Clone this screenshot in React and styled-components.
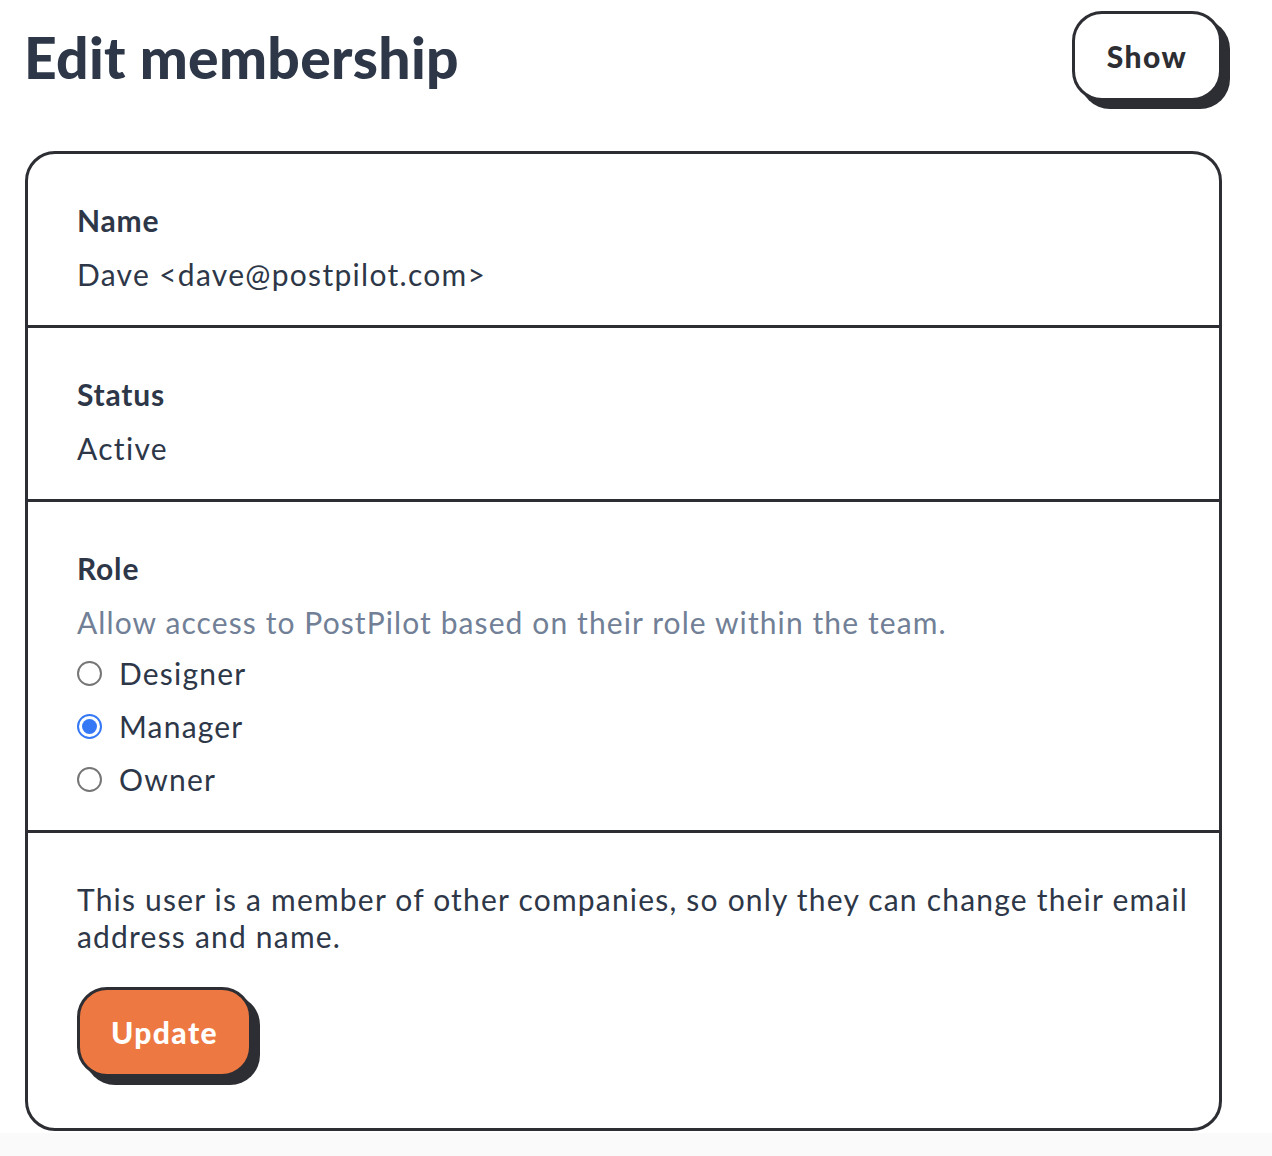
import React, { useState } from 'react'
import styled, { createGlobalStyle } from 'styled-components'

const GlobalStyle = createGlobalStyle`
  html, body {
    margin: 0;
    padding: 0;
    background: #fafafa;
    font-family: Lato, "Open Sans", sans-serif;
    color: #2d3748;
  }
`

const Page = styled.main`
  background: #ffffff;
  padding: 11px 50px 2px 25px;
`

const Header = styled.header`
  display: flex;
  justify-content: space-between;
  align-items: flex-start;
  margin-bottom: 50px;
`

const Title = styled.h1`
  margin: 18px 0 0 -1px;
  font-size: 57px;
  font-weight: 900;
  line-height: 1;
  letter-spacing: 0.3px;
  color: #2d3748;
`

const ChunkyButton = styled.button`
  font-family: Lato, sans-serif;
  font-weight: 900;
  font-size: 30px;
  letter-spacing: 1.4px;
  height: 90px;
  width: ${({ width }) => width}px;
  border: 3px solid #2d2e33;
  border-radius: 30px;
  box-shadow: 8px 8px 0 #2d2e33;
  background: ${({ primary }) => (primary ? '#ed7842' : '#ffffff')};
  color: ${({ primary }) => (primary ? '#ffffff' : '#2d2e33')};
  cursor: pointer;
  padding: 0;
`

const Card = styled.section`
  border: 3px solid #2d2e33;
  border-radius: 30px;
  overflow: hidden;
`

const Row = styled.div`
  padding: 48px 24px 32px 49px;
  border-top: ${({ first }) => (first ? 'none' : '3px solid #2d2e33')};
  padding-bottom: ${({ last }) => (last ? '51px' : '32px')};
`

const Label = styled.div`
  font-size: 30px;
  font-weight: 700;
  line-height: 37px;
  letter-spacing: 0.8px;
  margin-bottom: 17px;
  color: #2d3748;
`

const Value = styled.div`
  font-size: 30px;
  line-height: 37px;
  letter-spacing: 1.3px;
  color: #2d3748;
`

const Hint = styled(Value)`
  color: #718096;
  letter-spacing: 1.1px;
  margin-bottom: 14px;
`

const Options = styled.div`
  display: flex;
  flex-direction: column;
  gap: 16px;
`

const Option = styled.label`
  display: flex;
  align-items: center;
  gap: 17px;
  font-size: 30px;
  line-height: 37px;
  letter-spacing: 1.2px;
  cursor: pointer;
`

const Radio = styled.input.attrs({ type: 'radio' })`
  appearance: none;
  margin: 0;
  width: 25px;
  height: 25px;
  border-radius: 50%;
  border: 2px solid #767676;
  background: #fff;
  display: grid;
  place-items: center;

  &:checked {
    border-color: #3478f6;
  }

  &:checked::before {
    content: '';
    width: 15px;
    height: 15px;
    border-radius: 50%;
    background: #3478f6;
  }
`

const Note = styled(Value)`
  letter-spacing: 1.2px;
  margin-bottom: 32px;
`

const roles = ['Designer', 'Manager', 'Owner']

export default function App() {
  const [role, setRole] = useState('Manager')

  return (
    <>
      <GlobalStyle />
      <Page>
        <Header>
          <Title>Edit membership</Title>
          <ChunkyButton width={150}>Show</ChunkyButton>
        </Header>
        <Card>
          <Row first>
            <Label>Name</Label>
            <Value>Dave &lt;dave@postpilot.com&gt;</Value>
          </Row>
          <Row>
            <Label>Status</Label>
            <Value>Active</Value>
          </Row>
          <Row>
            <Label>Role</Label>
            <Hint>Allow access to PostPilot based on their role within the team.</Hint>
            <Options>
              {roles.map(r => (
                <Option key={r}>
                  <Radio name="role" checked={role === r} onChange={() => setRole(r)} />
                  {r}
                </Option>
              ))}
            </Options>
          </Row>
          <Row last>
            <Note>
              This user is a member of other companies, so only they can change their email address and name.
            </Note>
            <ChunkyButton primary width={175}>Update</ChunkyButton>
          </Row>
        </Card>
      </Page>
    </>
  )
}
